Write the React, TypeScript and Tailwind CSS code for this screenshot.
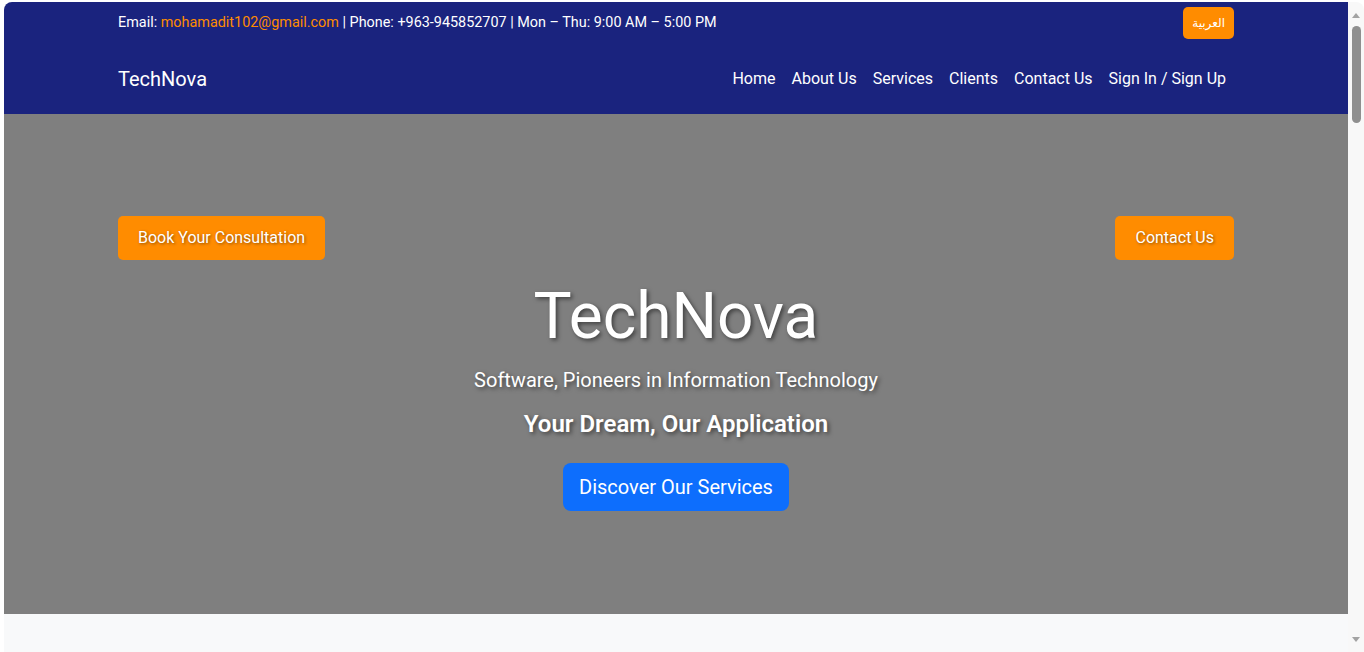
import React from 'react';

const navLinks = ['Home', 'About Us', 'Services', 'Clients', 'Contact Us', 'Sign In / Sign Up'];

const font = { fontFamily: 'Roboto, "DejaVu Sans", sans-serif' };

export default function App() {
  return (
    <div className="h-screen flex bg-white pt-[2px] pl-[4px] overflow-hidden" style={font}>
      {/* Page */}
      <div className="flex-1 flex flex-col bg-[#f8f9fa] rounded-tl-[8px] overflow-hidden">
        <header className="bg-[#1a237e] text-white">
          {/* Top info bar */}
          <div className="max-w-[1140px] mx-auto w-full px-3 h-[42px] flex items-center justify-between text-[0.9rem]">
            <div>
              Email: <span className="text-[#ff8c00]">mohamadit102@gmail.com</span> | Phone: +963-945852707 | Mon – Thu: 9:00 AM – 5:00 PM
            </div>
            <button className="h-8 px-[9px] bg-[#ff8c00] rounded-[5px] text-xs text-white" style={{ fontFamily: '"DejaVu Sans", sans-serif' }}>
              العربية
            </button>
          </div>
          {/* Main nav */}
          <nav className="max-w-[1140px] mx-auto w-full px-3 h-[70px] flex items-center justify-between">
            <a className="text-xl">TechNova</a>
            <ul className="flex">
              {navLinks.map((l) => (
                <li key={l} className="px-2 text-base">{l}</li>
              ))}
            </ul>
          </nav>
        </header>

        {/* Hero */}
        <section className="h-[500px] shrink-0 bg-[#7f7f7f] text-white [text-shadow:2px_2px_4px_rgba(0,0,0,0.5)]">
          <div className="max-w-[1140px] mx-auto w-full px-3 pt-[102px] flex justify-between">
            <button className="px-5 py-[10px] leading-6 text-base bg-[#ff8c00] rounded-[5px] [text-shadow:1px_1px_3px_rgba(0,0,0,0.45)]">
              Book Your Consultation
            </button>
            <button className="px-5 py-[10px] leading-6 text-base bg-[#ff8c00] rounded-[5px] [text-shadow:1px_1px_3px_rgba(0,0,0,0.45)]">
              Contact Us
            </button>
          </div>
          <div className="flex flex-col items-center text-center">
            <h1 className="mt-[19px] text-[64px] leading-[1.2] font-normal">TechNova</h1>
            <p className="mt-[9px] text-xl leading-[1.5]">Software, Pioneers in Information Technology</p>
            <h2 className="mt-[15px] text-2xl leading-[1.2] font-semibold">Your Dream, Our Application</h2>
            <button className="mt-[24px] h-12 px-4 text-xl bg-[#0d6efd] rounded-lg">
              Discover Our Services
            </button>
          </div>
        </section>
        <div className="flex-1" />
      </div>

      {/* Scrollbar */}
      <div className="w-[16px] bg-[#f8f8f8] rounded-tr-[8px] flex flex-col items-center pt-[11px] pb-[10px]">
        <div className="w-0 h-0 border-x-[4px] border-x-transparent border-b-[5px] border-b-[#a3a3a3]" />
        <div className="mt-[8px] w-[9px] h-[97px] rounded-full bg-[#8f8f8f]" />
        <div className="flex-1" />
        <div className="w-0 h-0 border-x-[4px] border-x-transparent border-t-[5px] border-t-[#a3a3a3]" />
      </div>
    </div>
  );
}
